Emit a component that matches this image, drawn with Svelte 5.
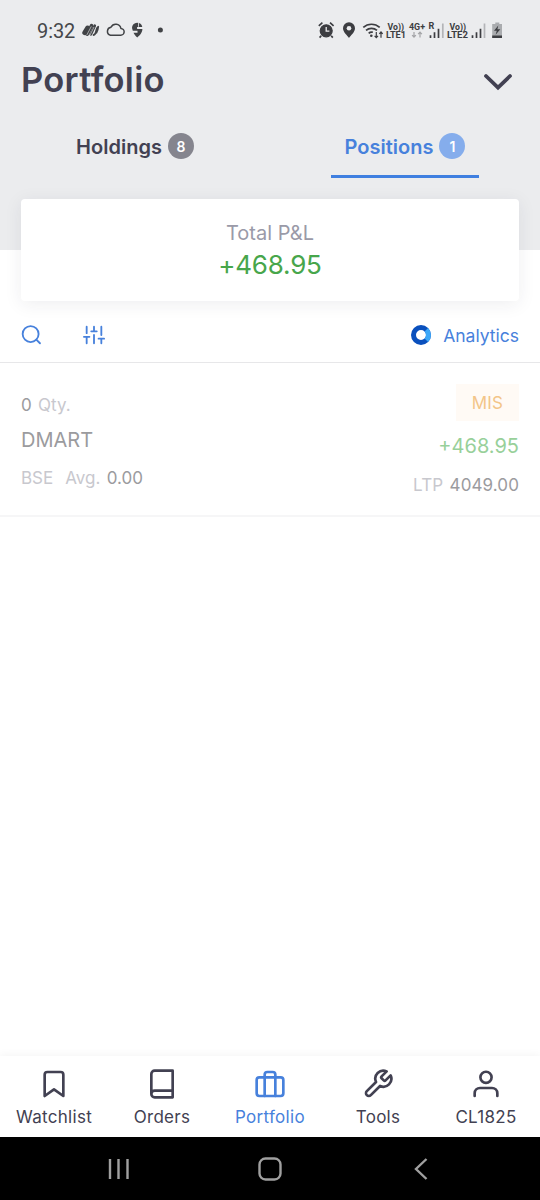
<script>
  const nav = [
    { id: 'watchlist', label: 'Watchlist' },
    { id: 'orders', label: 'Orders' },
    { id: 'portfolio', label: 'Portfolio' },
    { id: 'tools', label: 'Tools' },
    { id: 'account', label: 'CL1825' }
  ];
  const active = 'portfolio';
</script>

<div class="screen">
  <header>
    <div class="status">
      <span class="clock">9:32</span>
      <svg class="s-left" width="90" height="20" viewBox="0 0 90 20">
        <g fill="none" stroke="#414346" stroke-linecap="round" stroke-linejoin="round">
          <path d="M2.600 12.800 5.600 7.800" stroke-width="4.600" />
          <path d="M5.200 14.200 9.600 5.600" stroke-width="3.600" />
          <path d="M8.800 14.400 12.800 5.600" stroke-width="2.600" />
          <path d="M11.600 15c3.200-.2 1.500-6.200 4.600-8.200-.2 2.500-.6 4.200-1.800 6" stroke-width="1.800" />
          <path d="M28.400 15.200h10.200a3.400 3.400 0 0 0 .3-6.800 5.300 5.300 0 0 0-9.900-1.200 4.100 4.100 0 0 0-.6 8z" stroke-width="1.500" />
        </g>
        <path d="M4.700 15.200 9.300 6.400M8 15.200l4-8.200" stroke="#ebecee" stroke-width=".6" />
        <path d="M55 2.700a5.400 5.400 0 0 1 5.300 4.200h-5.200v2.200h5.300c0 3.900-3.300 7-5.100 8.300-1.600-1.300-3-3-3.800-4.700h4v-2h-4.700l-.8-2.700A5.200 5.200 0 0 1 55 2.700z" fill="#414346" />
        <path d="M56.500 3v3.800" stroke="#ebecee" stroke-width=".8" />
        <circle cx="78.400" cy="10" r="2.500" fill="#414346" />
      </svg>
      <svg class="s-right" width="190" height="24" viewBox="0 0 190 24">
        <g fill="none" stroke="#3c3d41">
          <circle cx="10.200" cy="12.800" r="6" fill="#3c3d41" stroke-width="1.200" />
          <path d="m2.800 7.800 3.600-3.100M17.600 7.800 14 4.700M5.200 17.800l-1.600 1.800M15.200 17.800l1.600 1.800" stroke-width="1.700" />
          <path d="M10.200 8.900v4.300h3.200" stroke="#ebecee" stroke-width="1.300" />
          <path d="M47.300 9.400a12.300 12.300 0 0 1 16.400 0M50 12.400a8.300 8.300 0 0 1 11 0M52.700 15.300a4.300 4.300 0 0 1 4.200-1" stroke-width="1.700" />
          <path d="M60.300 14v5.500M58.600 17.800l1.700 1.900 1.700-1.900M65 19.700V14M63.300 15.900l1.700-1.900 1.700 1.900" stroke-width="1.200" />
        </g>
        <circle cx="55.300" cy="17.700" r="1.300" fill="#3c3d41" />
        <path d="M33 4.300a6 6 0 0 0-6 6c0 4 4.400 7.100 6 9.700 1.600-2.600 6-5.700 6-9.700a6 6 0 0 0-6-6z" fill="#3c3d41" />
        <circle cx="33" cy="10.200" r="2.300" fill="#ebecee" />
        <g class="tiny">
          <text x="71.500" y="11.500" textLength="16.500" lengthAdjust="spacingAndGlyphs">Vo))</text>
          <text x="70" y="20" textLength="20" lengthAdjust="spacingAndGlyphs">LTE1</text>
          <text x="93" y="12" textLength="16" lengthAdjust="spacingAndGlyphs">4G+</text>
          <text x="112.500" y="11">R</text>
          <text x="133.500" y="11.500" textLength="16.500" lengthAdjust="spacingAndGlyphs">Vo))</text>
          <text x="131" y="20" textLength="21" lengthAdjust="spacingAndGlyphs">LTE2</text>
        </g>
        <path d="M98 14v5M96.100 17.200l1.900 2 1.900-2M104 19.400v-5M102.100 16.200l1.900-2 1.900 2" fill="none" stroke="#a3a4a7" stroke-width="1.200" />
        <path d="M114.500 17.300v2.700M118.500 14.300V20M122.500 10.700V20M156.500 17.300v2.700M160.500 14.300V20M164.500 10.700V20" stroke="#3c3d41" stroke-width="1.700" />
        <path d="M126.800 5.500V20M168.500 5.500V20" stroke="#b3b4b7" stroke-width="1.700" />
        <path d="M179.300 4.500h4v1.600h2.700V20h-9.800V6.100h3.100z" fill="#aaacaf" />
        <path d="M176.200 17.600h9.800V20h-9.800zM182.300 7.400l-4.300 5.300h2.800l-1.200 4 4.700-5.400h-2.900z" fill="#3c3d41" />
      </svg>
    </div>

    <div class="titlebar">
      <h1>Portfolio</h1>
      <svg width="32" height="20" viewBox="0 0 32 20">
        <path d="m4 4 12 11.500L28 4" fill="none" stroke="#424152" stroke-width="3.800" stroke-linecap="round" stroke-linejoin="miter" />
      </svg>
    </div>

    <div class="tabs">
      <div class="tab holdings"><span>Holdings</span><b>8</b></div>
      <div class="tab positions"><span>Positions</span><b>1</b></div>
    </div>
  </header>

  <section class="total">
    <div class="caption">Total P&amp;L</div>
    <div class="amount">+468.95</div>
  </section>

  <div class="toolbar">
    <svg class="line" width="22" height="22" viewBox="0 0 24 24"><circle cx="10.500" cy="11" r="8.700" /><path d="m20.700 21-4-4" /></svg>
    <svg class="line sliders" width="22" height="22" viewBox="0 0 24 24">
      <path d="M4 21v-7M4 10V3M12 21v-9M12 8V3M20 21v-5M20 12V3M1 14h6M9 8h6M17 16h6" />
    </svg>
    <svg class="donut" width="20" height="20" viewBox="0 0 20 20">
      <circle cx="10" cy="10" r="7.500" fill="none" stroke="#0a50bd" stroke-width="5" />
      <path d="M15.300 4.700a7.500 7.500 0 0 1 0 10.600" fill="none" stroke="#3ca7f8" stroke-width="5" />
    </svg>
    <span class="analytics">Analytics</span>
  </div>

  <article>
    <div class="col">
      <div class="qty"><span>0</span> <i>Qty.</i></div>
      <div class="name">DMART</div>
      <div class="avg"><i>BSE</i><i class="avg-label">Avg.</i> <span>0.00</span></div>
    </div>
    <div class="col right">
      <div class="mis">MIS</div>
      <div class="gain">+468.95</div>
      <div class="ltp"><i>LTP</i> <span>4049.00</span></div>
    </div>
  </article>

  <nav>
    {#each nav as item}
      <div class="item {item.id}" class:active={item.id === active}>
        <svg width="32" height="32" viewBox="0 0 24 24">
          {#if item.id === 'watchlist'}
            <path d="m19 21-7-5-7 5V5a2 2 0 0 1 2-2h10a2 2 0 0 1 2 2z" />
          {:else if item.id === 'orders'}
            <path d="M4 19.500A2.500 2.500 0 0 1 6.500 17H20M6.500 2H20v20H6.500A2.500 2.500 0 0 1 4 19.500v-15A2.500 2.500 0 0 1 6.500 2z" />
          {:else if item.id === 'portfolio'}
            <rect x="2" y="7" width="20" height="14" rx="2" /><path d="M16 21V5a2 2 0 0 0-2-2h-4a2 2 0 0 0-2 2v16" />
          {:else if item.id === 'tools'}
            <path d="M14.700 6.300a1 1 0 0 0 0 1.400l1.600 1.600a1 1 0 0 0 1.400 0l3.770-3.770a6 6 0 0 1-7.940 7.940l-6.910 6.910a2.120 2.120 0 0 1-3-3l6.910-6.910a6 6 0 0 1 7.940-7.940l-3.760 3.760z" />
          {:else}
            <path d="M20.500 21v-2a4 4 0 0 0-4-4h-9a4 4 0 0 0-4 4v2" /><circle cx="12" cy="7" r="4.200" />
          {/if}
        </svg>
        <span>{item.label}</span>
      </div>
    {/each}
  </nav>

  <footer>
    <svg width="22" height="22" viewBox="0 0 22 22"><path d="M2 1v20M10.500 1v20M19.500 1v20" /></svg>
    <svg class="home" width="24" height="24" viewBox="0 0 24 24"><rect x="1.500" y="1.500" width="21" height="21" rx="6" /></svg>
    <svg width="14" height="22" viewBox="0 0 14 22"><path d="M12.500 1 2 11l10.500 10" /></svg>
  </footer>
</div>

<style>
  :global(body) { margin: 0; background: #fff; }
  .screen {
    width: 540px; height: 1200px; display: flex; flex-direction: column;
    overflow: hidden; background: #fff; color: #424152;
    font-family: Inter, "Liberation Sans", sans-serif;
  }
  svg { display: block; flex: none; }
  header { height: 250px; flex: none; background: #ebecee; }
  .status { height: 60px; display: flex; align-items: center; padding: 0 34px 0 37px; box-sizing: border-box; }
  .clock { font: 400 20px/24px Roboto, sans-serif; color: #45474a; width: 45px; padding-top: 2px; letter-spacing: -0.1px; }
  .s-right { margin-left: auto; }
  .tiny { font: 700 9px Roboto, sans-serif; fill: #3c3d41; }
  .titlebar { height: 40px; display: flex; align-items: center; justify-content: space-between; padding: 0 26px 0 21px; }
  .titlebar svg { margin-top: 3px; }
  h1 { margin: 0; font-size: 34.5px; line-height: 40px; font-weight: 600; letter-spacing: 0.3px; }
  .tabs { height: 78px; display: flex; justify-content: space-between; padding: 0 61px; }
  .tab {
    width: 148px; height: 78px; box-sizing: border-box; display: flex; align-items: center; justify-content: center;
    gap: 6px; padding-top: 19px; font-size: 20px; font-weight: 600;
    border-bottom: 3px solid transparent;
  }
  .tab b {
    width: 26px; height: 26px; border-radius: 50%; background: #85858e; color: #fff;
    font-size: 14px; font-weight: 600; line-height: 27px; text-align: center; margin-top: -2px;
  }
  .positions { color: #4781dc; border-color: #3f7fe0; }
  .positions b { background: #85adec; }
  .total {
    flex: none; height: 102px; margin: -51px 21px 0; background: #fff; border-radius: 4px;
    box-shadow: 0 3px 18px rgba(40, 40, 60, 0.08); text-align: center; box-sizing: border-box; padding-top: 19px;
  }
  .caption { font-size: 20px; line-height: 31px; color: #9a9aa8; }
  .amount { font-size: 26px; line-height: 32px; letter-spacing: -0.2px; color: #47a64b; }
  .toolbar {
    flex: none; height: 62px; box-sizing: border-box; border-bottom: 1px solid #e7e7e9;
    display: flex; align-items: center; padding: 6px 21px 0;
  }
  .line { fill: none; stroke: #4781dc; stroke-width: 2; stroke-linecap: round; stroke-linejoin: round; }
  .sliders { margin-left: 40px; }
  .donut { margin-left: auto; }
  .analytics { margin-left: 12px; font-size: 17.5px; color: #4781dc; padding-top: 2px; }
  article {
    flex: none; height: 154px; box-sizing: border-box; border-bottom: 2px solid #f6f6f7;
    display: flex; justify-content: space-between; padding: 21px 21px 0; font-size: 17px;
    color: #9b9b9e; word-spacing: 1.5px;
  }
  i { font-style: normal; color: #c8c8ce; }
  .col { display: flex; flex-direction: column; }
  .right { align-items: flex-end; }
  .qty { line-height: 42px; }
  .name { font-size: 20px; line-height: 28px; }
  .avg { line-height: 48px; }
  .avg-label { margin-left: 12px; }
  .mis { width: 63px; height: 37px; line-height: 38px; text-align: center; background: #fffaf5; color: #f3c588; letter-spacing: 0.2px; }
  .gain { font-size: 20px; line-height: 51px; color: #98d09a; }
  .ltp { line-height: 26px; letter-spacing: 0.1px; }
  nav {
    flex: none; height: 81px; margin-top: auto; display: grid; grid-template-columns: repeat(5, 108px);
    background: #fff; box-shadow: 0 -2px 8px rgba(0, 0, 0, 0.04);
  }
  .item { display: flex; flex-direction: column; align-items: center; padding-top: 12px; font-size: 17px; line-height: 35px; letter-spacing: 0.3px; }
  .item svg { fill: none; stroke: currentColor; stroke-width: 2; stroke-linecap: round; stroke-linejoin: round; }
  .item.active { color: #4781dc; }
  footer { flex: none; height: 63px; box-sizing: border-box; background: #000; display: flex; align-items: center; padding: 1px 112px 0 108px; justify-content: space-between; }
  footer svg { fill: none; stroke: #a0a0a0; stroke-width: 2.400; }
  footer .home { margin-right: 5px; }
</style>
